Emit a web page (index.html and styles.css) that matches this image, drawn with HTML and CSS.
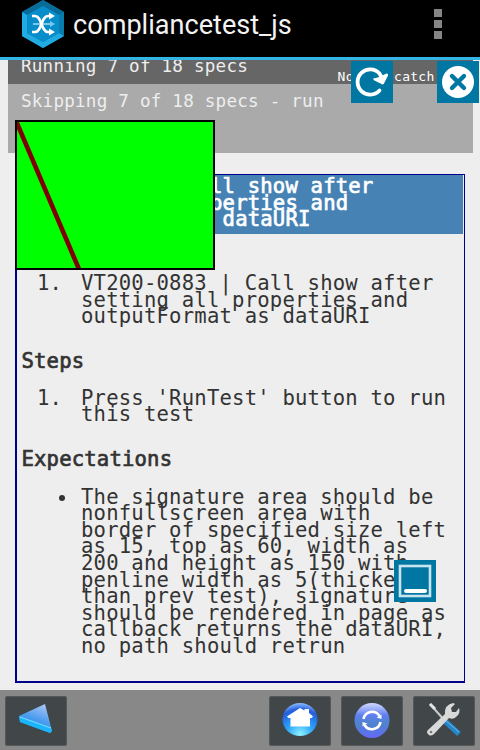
FILE: index.html
```html
<!DOCTYPE html>
<html lang="en">
<head>
<meta charset="utf-8">
<title>compliancetest_js</title>
<link rel="stylesheet" href="styles.css">
</head>
<body>
<header class="appbar">
  <svg class="logo" width="42" height="48" viewBox="0 0 42 48">
    <path d="M21 0 42 12V36L21 48 0 36V12Z" fill="#0786bd"/>
    <path d="M0 12 21 0 42 12 37 15 21 6 5 15Z" fill="#086b98"/>
    <path d="M0 12 5 15V33L21 42 37 33 42 36 21 48 0 36Z" fill="#20ace3"/>
    <path d="M37 15 42 12V36L37 33Z" fill="#087cac"/>
    <path d="M5 15 21 6 37 15V33L21 42 5 33Z" fill="#078dca"/>
    <path d="M11 24H29" stroke="#7cc8e8" stroke-width="2"/><path d="M28 21 33 24 28 27Z" fill="#7cc8e8"/>
    <path d="M10 16H13C20 16 19 32 26 32H29M10 32H13C20 32 19 16 26 16H29" fill="none" stroke="#fff" stroke-width="2.6"/>
    <path d="M27 12.5 33 16 27 19.5ZM27 28.5 33 32 27 35.5Z" fill="#fff"/>
  </svg>
  <h1 class="title">compliancetest_js</h1>
  <div class="overflow"><i></i><i></i><i></i></div>
</header>
<main class="page">
  <section class="report">
    <div class="running">Running 7 of 18 specs<span class="catch">No try/catch</span></div>
    <div class="skipping">Skipping 7 of 18 specs - run</div>
  </section>
  <section class="test">
    <h2 class="test-title">VT200-0883 | Call show after<br>setting all properties and<br>outputFormat as dataURI</h2>
    <div class="list description"><span class="marker">1.</span><p>VT200-0883 | Call show after<br>setting all properties and<br>outputFormat as dataURI</p></div>
    <h3 class="heading">Steps</h3>
    <div class="list"><span class="marker">1.</span><p>Press 'RunTest' button to run<br>this test</p></div>
    <h3 class="heading">Expectations</h3>
    <div class="list expected"><span class="marker bullet"></span><p>The signature area should be<br>nonfullscreen area with<br>border of specified size left<br>as 15, top as 60, width as<br>200 and height as 150 with<br>penline width as 5(thicker<br>than prev test), signature<br>should be rendered in page as<br>callback returns the dataURI,<br>no path should retrun</p></div>
  </section>
</main>
<svg class="signature" width="200" height="150" viewBox="0 0 200 150">
  <rect width="200" height="150" fill="#000"/>
  <rect x="2" y="2" width="196" height="146" fill="#0f0"/>
  <path d="M2 2H4L66 148H61L2 9Z" fill="#800000"/>
</svg>
<svg class="float reload" viewBox="0 0 42 42">
  <path d="M28.500 29.500A12.600 12.600 0 1 1 28.500 12.500L31 17" fill="none" stroke="#fff" stroke-width="3.800" stroke-linecap="round"/>
  <path d="M22.500 17Q25 17.500 28 16L35.500 12.500Q37.500 12.500 37 14.500L33 22.500Q32 24 30.500 23L22.500 19Z" fill="#fff"/>
</svg>
<svg class="float close" viewBox="0 0 42 42">
  <circle cx="21" cy="21" r="16" fill="#fff"/>
  <path d="M15 15 27 27M27 15 15 27" stroke="#0076a3" stroke-width="4.400" stroke-linecap="round"/>
</svg>
<svg class="float minimize" viewBox="0 0 42 42">
  <rect x="6" y="6" width="30" height="30" fill="none" stroke="#c9e4ee" stroke-width="2.600"/>
  <path d="M12 31H31" stroke="#fff" stroke-width="4" stroke-linecap="round"/>
</svg>
<footer class="toolbar">
  <div class="button back"><svg width="62" height="50" viewBox="0 0 62 50">
    <defs><linearGradient id="tri" x1=".7" y1="0" x2=".3" y2="1"><stop stop-color="#a9c5f5"/><stop offset=".5" stop-color="#4b9cee"/><stop offset="1" stop-color="#168cf4"/></linearGradient></defs>
    <path d="M14 20 40 8 47 35 45 37 15 26Z" fill="url(#tri)"/>
    <path d="M14 20 46 32 47 35 45 37 15 26Z" fill="#1ab5fa"/><path d="M15 21 46 32" stroke="#76d7ff" stroke-width="1.300"/>
  </svg></div>
  <div class="button"><svg width="62" height="50" viewBox="0 0 62 50">
    <defs><radialGradient id="home" cx=".5" cy=".95" r=".95"><stop stop-color="#8ff4ff"/><stop offset=".4" stop-color="#2da5fa"/><stop offset=".8" stop-color="#245edc"/><stop offset="1" stop-color="#8cbcff"/></radialGradient></defs>
    <ellipse cx="31" cy="23.500" rx="17.500" ry="16.500" fill="url(#home)"/>
    <path d="M18 20.500 31 12 35.500 14.500V13H40V17L44 20.500 42.500 22H41V30.500H21.500V22H19.500Z" fill="#fff"/>
  </svg></div>
  <div class="button"><svg width="62" height="50" viewBox="0 0 62 50">
    <defs><linearGradient id="sync" x2="0" y2="1"><stop stop-color="#d2d9ff"/><stop offset=".35" stop-color="#5e7ff0"/><stop offset=".6" stop-color="#4e83cb"/><stop offset="1" stop-color="#6469fa"/></linearGradient></defs>
    <circle cx="31" cy="24.500" r="17.500" fill="url(#sync)"/>
    <path d="M22.500 23A8.700 8.700 0 0 1 38.500 20M39.500 26A8.700 8.700 0 0 1 23.500 29" fill="none" stroke="#fff" stroke-width="2.600"/>
    <path d="M35.500 21.500 40.500 18.500V23ZM26.500 27.500 21.500 30.500V26Z" fill="#fff"/>
  </svg></div>
  <div class="button"><svg width="62" height="50" viewBox="0 0 62 50">
    <path d="M17 8 32 25" stroke="#c8cccc" stroke-width="2"/><path d="M17 8 22 13" stroke="#e2e5e5" stroke-width="3"/>
    <path d="M32 25 46 38" stroke="#2586cb" stroke-width="5.500"/><path d="M32 24 46 36" stroke="#67b7e9" stroke-width="1"/>
    <path d="M15 34 32 18Q31 9 40 7L42 8 38 12 39 16 43 16 46 12Q48 17 43 21 40 24 36 22L21 38Q17 41 15 38 13 36 15 34Z" fill="#d8dada"/><circle cx="18" cy="36" r="1.300" fill="#777"/>
  </svg></div>
</footer>
</body>
</html>
```
FILE: styles.css
```css
* { box-sizing: border-box; }

body {
  margin: 0;
  width: 480px;
  height: 750px;
  overflow: hidden;
  position: relative;
  display: flex;
  flex-direction: column;
  background: #eee;
  color: #333;
  font-family: "DejaVu Sans Mono", monospace;
}

.appbar {
  height: 60px;
  flex: none;
  display: flex;
  align-items: flex-start;
  padding-left: 22px;
  background: #000;
  border-bottom: 3px solid #33b5e5;
}

.title {
  margin: 7px 0 0 9px;
  width: 361px;
  color: #f3f3f3;
  font: 400 27.1px/36px Roboto, sans-serif;
}

.overflow { display: grid; gap: 3px; margin-top: 9px; }
.overflow i { width: 8px; height: 8px; background: #858585; }

.page { flex: 1; min-height: 0; overflow: hidden; }

.report {
  width: 465px;
  height: 93px;
  margin-left: 7.5px;
  background: #aaa;
  color: #eee;
  font-size: 17.6px;
  letter-spacing: 0.22px;
}

.running {
  display: flex;
  justify-content: space-between;
  height: 24px;
  padding: 0 38px 0 13.5px;
  line-height: 12px;
  background: #666;
}

.catch {
  color: #fff;
  font-size: 13px;
  letter-spacing: 0.25px;
  line-height: 33px;
}

.skipping { padding-left: 13.5px; line-height: 34px; }

.test {
  width: 450px;
  height: 509px;
  margin: 21px 0 0 15px;
  border: solid #00008b;
  border-width: 1px 1px 2px 2px;
  font-size: 20.6px;
  line-height: 16.6px;
  letter-spacing: 0.19px;
}

.test-title,
.heading {
  font-size: inherit;
  font-weight: 400;
  -webkit-text-stroke: 0.7px currentColor;
}

.test-title {
  width: 446px;
  height: 59px;
  margin: 0;
  padding: 3.3px 4.5px;
  background: #4682b4;
  color: #fff;
  letter-spacing: 0.17px;
}

.heading { margin: 28px 0 20.5px 4.5px; letter-spacing: 0.16px; }

.list { display: flex; }
.list p { margin: 0; white-space: nowrap; }
.marker { flex: none; width: 64px; padding-left: 20px; }
.bullet { padding: 6px 0 0 41.5px; }
.bullet::before {
  content: "";
  display: block;
  width: 6.5px;
  height: 6.5px;
  border-radius: 50%;
  background: #333;
}
.description { margin-top: 41px; }
.expected { padding-top: 0.5px; }

.signature { position: absolute; left: 15px; top: 120px; }

.float {
  position: absolute;
  width: 42px;
  height: 42px;
  background: #0076a3;
}
.reload { left: 351px; top: 61px; }
.close { left: 437px; top: 61px; }
.minimize { left: 394px; top: 560px; }

.toolbar {
  flex: none;
  display: flex;
  gap: 10px;
  height: 60px;
  padding: 6px 5px;
  background: #888;
}

.button {
  width: 62px;
  height: 50px;
  overflow: hidden;
  border-radius: 3px;
  background: #414649;
  box-shadow: inset 0 0 0 1px #55595c;
}
.button svg { display: block; }
.back { margin-right: auto; }
```
